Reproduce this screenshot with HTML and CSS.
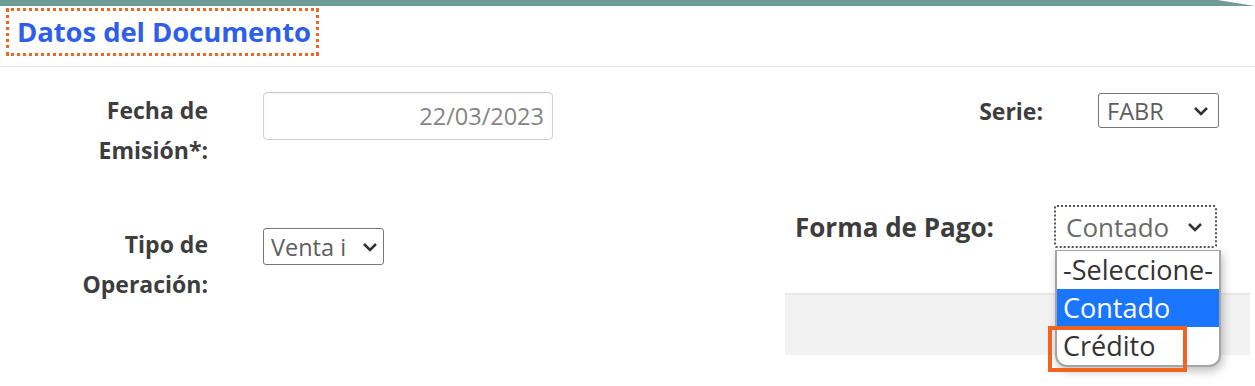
FILE: index.html
```html
<!DOCTYPE html>
<html lang="es">
<head>
<meta charset="utf-8">
<title>Datos del Documento</title>
<link rel="stylesheet" href="styles.css">
</head>
<body>
<div class="topbar"></div>
<header class="head">
  <h2 class="title">Datos del Documento</h2>
</header>
<main class="form">
  <div class="row row1">
    <div class="field f-fecha">
      <div class="lbl lbl-left">Fecha de<br>Emisión*:</div>
      <div class="input date">22/03/2023</div>
    </div>
    <div class="field f-serie">
      <div class="lbl">Serie:</div>
      <div class="select s-serie"><span class="val">FABR</span><svg class="chev" viewBox="0 0 16 10"><path d="M2 2l6 6 6-6" fill="none" stroke="#333" stroke-width="2.6"/></svg></div>
    </div>
  </div>
  <div class="row row2">
    <div class="field f-tipo">
      <div class="lbl lbl-left">Tipo de<br>Operación:</div>
      <div class="select s-tipo"><span class="val clip">Venta interna</span><svg class="chev" viewBox="0 0 16 10"><path d="M2 2l6 6 6-6" fill="none" stroke="#333" stroke-width="2.6"/></svg></div>
    </div>
    <div class="right-col">
      <div class="field f-pago">
        <div class="lbl">Forma de Pago:</div>
        <div class="select-wrap">
          <div class="select s-pago"><span class="val">Contado</span><svg class="chev" viewBox="0 0 16 10"><path d="M2 2l6 6 6-6" fill="none" stroke="#333" stroke-width="2.6"/></svg></div>
          <ul class="dropdown">
            <li class="opt">-Seleccione-</li>
            <li class="opt sel">Contado</li>
            <li class="opt mark">Crédito</li>
          </ul>
        </div>
      </div>
      <div class="panel"></div>
    </div>
  </div>
</main>
</body>
</html>
```

FILE: styles.css
```css
* { box-sizing: border-box; }
html, body { margin: 0; padding: 0; background: #fff; }
body {
  width: 1255px;
  height: 386px;
  overflow: hidden;
  font-family: "Open Sans", "Noto Sans", sans-serif;
  color: #3b3b3b;
}
.topbar {
  height: 6px;
  background: #6e9c96;
  clip-path: polygon(0 0, 97% 0, 100% 100%, 0 100%);
}
.head {
  height: 61px;
  border-bottom: 1px solid #e4e4e4;
  padding: 2px 0 0 6px;
}
.title {
  display: inline-block;
  margin: 0;
  padding: 3px 5px 3px 8px;
  border: 3.5px dotted #f06522;
  font-size: 27.5px;
  font-weight: 700;
  line-height: 36px;
  color: #2f5fe9;
  letter-spacing: -0.1px;
}
.form { position: relative; }
.row { display: flex; }
.row1 { padding-top: 25px; height: 160px; }
.field { display: flex; align-items: flex-start; }
.lbl {
  font-size: 23px;
  font-weight: 700;
  line-height: 40px;
  color: #3d3d3d;
  text-align: right;
}
.lbl-left { width: 208px; margin-top: -2px; }
.input {
  margin-left: 55px;
  width: 290px;
  height: 48px;
  border: 1px solid #cfcfcf;
  border-radius: 4px;
  box-shadow: inset 0 1px 2px rgba(0,0,0,0.06);
  font-size: 23.5px;
  color: #858585;
  text-align: right;
  padding: 7px 8px 0 0;
}
.select {
  display: flex;
  align-items: center;
  justify-content: space-between;
  border: 1px solid #767676;
  border-radius: 3px;
  background: #fff;
  font-size: 23.5px;
  color: #5e5e5e;
  white-space: nowrap;
  overflow: hidden;
}
.select .val { overflow: hidden; }
.chev { width: 16px; height: 10px; flex: none; }
.f-serie { margin-left: 400px; margin-top: 1px; }
.f-serie .lbl { width: 90px; line-height: 36px; }
.s-serie {
  margin-left: 55px;
  width: 121px;
  height: 35px;
  padding: 0 9px 0 8px;
}
.f-tipo { margin-top: -1px; }
.s-tipo {
  margin-left: 55px;
  margin-top: 2px;
  width: 121px;
  height: 37px;
  padding: 0 5px 0 7px;
}
.s-tipo .val { width: 75px; }
.right-col {
  margin-left: 401px;
  margin-top: -22px;
  width: 465px;
}
.f-pago .lbl {
  width: 269px;
  line-height: 44px;
  text-align: left;
  font-size: 26px;
  padding-left: 10px;
}
.select-wrap { position: relative; }
.s-pago {
  width: 163px;
  height: 43px;
  padding: 0 12px 0 10px;
  font-size: 26px;
  color: #6a6a6a;
  border: 2px dotted #555;
}
.dropdown {
  position: absolute;
  left: 1px;
  top: 45px;
  width: 166px;
  margin: 0;
  padding: 0;
  list-style: none;
  background: #fff;
  border: 2px solid #a4a4a4;
  border-top-width: 1px;
  border-radius: 0 0 12px 12px;
  box-shadow: 2px 4px 10px rgba(0,0,0,0.25);
  z-index: 2;
}
.opt {
  font-size: 27px;
  line-height: 38px;
  height: 38px;
  padding-left: 6px;
  color: #333;
  white-space: nowrap;
  overflow: hidden;
}
.opt.sel { background: #1a75ff; color: #fff; }
.opt.mark { position: relative; overflow: visible; }
.opt.mark::after {
  content: "";
  position: absolute;
  left: -9px;
  top: -1px;
  width: 131px;
  height: 38px;
  border: 4px solid #ee6420;
}
.panel {
  margin-top: 44px;
  height: 62px;
  width: 465px;
  background: #f2f2f2;
  border-top: 2px solid #e8e8e8;
}
```
